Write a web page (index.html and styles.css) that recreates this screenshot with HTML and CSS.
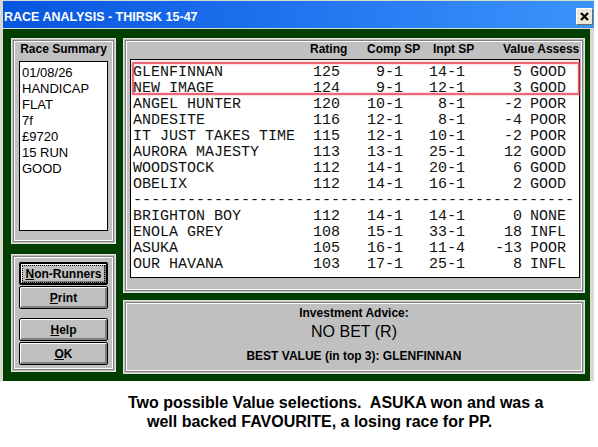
FILE: index.html
```html
<!DOCTYPE html>
<html lang="en">
<head>
  <meta charset="UTF-8">
  <meta name="viewport" content="width=device-width, initial-scale=1.0">
  <title>Race Analysis - Thirsk 15-47</title>
  <link rel="stylesheet" href="styles.css">
</head>
<body>
  <div class="window">
    <div class="titlebar">
      <span class="title">RACE ANALYSIS - THIRSK 15-47</span>
      <span class="close">
        <svg width="9" height="9" viewBox="0 0 9 9"><path d="M1 1L8 8M8 1L1 8" stroke="#000" stroke-width="2.2"/></svg>
      </span>
    </div>
    <div class="client">
      <div class="side">
        <div class="panel summary">
          <div class="panel-title">Race Summary</div>
          <div class="summary-list">
            <div>01/08/26</div>
            <div>HANDICAP</div>
            <div>FLAT</div>
            <div>7f</div>
            <div>£9720</div>
            <div>15 RUN</div>
            <div>GOOD</div>
          </div>
        </div>
        <div class="panel buttons">
          <button class="default"><span class="focus"><u>N</u>on-Runners</span></button>
          <button class="pair"><u>P</u>rint</button>
          <button class="group"><u>H</u>elp</button>
          <button class="pair"><u>O</u>K</button>
        </div>
      </div>
      <div class="main">
        <div class="panel runners">
          <div class="cols">
            <span></span><span>Rating</span><span>Comp SP</span><span>Inpt SP</span><span>Value Assess</span>
          </div>
          <div class="list" id="list">
            <div class="highlight"></div>
          </div>
        </div>
        <div class="panel advice">
          <div class="label">Investment Advice:</div>
          <div class="verdict">NO BET (R)</div>
          <div class="best">BEST VALUE (in top 3): GLENFINNAN</div>
        </div>
      </div>
    </div>
  </div>

  <div class="caption">
    <div>Two possible Value selections.&nbsp; ASUKA won and was a</div>
    <div class="indent">well backed FAVOURITE, a losing race for PP.</div>
  </div>

  <script>
    // name, rating, comp SP, input SP, value, assessment ; null = separator
    const runners = [
      ['GLENFINNAN', 125, '9-1', '14-1', 5, 'GOOD'],
      ['NEW IMAGE', 124, '9-1', '12-1', 3, 'GOOD'],
      ['ANGEL HUNTER', 120, '10-1', '8-1', -2, 'POOR'],
      ['ANDESITE', 116, '12-1', '8-1', -4, 'POOR'],
      ['IT JUST TAKES TIME', 115, '12-1', '10-1', -2, 'POOR'],
      ['AURORA MAJESTY', 113, '13-1', '25-1', 12, 'GOOD'],
      ['WOODSTOCK', 112, '14-1', '20-1', 6, 'GOOD'],
      ['OBELIX', 112, '14-1', '16-1', 2, 'GOOD'],
      null,
      ['BRIGHTON BOY', 112, '14-1', '14-1', 0, 'NONE'],
      ['ENOLA GREY', 108, '15-1', '33-1', 18, 'INFL'],
      ['ASUKA', 105, '16-1', '11-4', -13, 'POOR'],
      ['OUR HAVANA', 103, '17-1', '25-1', 8, 'INFL']
    ];

    const list = document.getElementById('list');
    runners.forEach(r => {
      const row = document.createElement('div');
      if (!r) {
        row.className = 'sep';
        row.textContent = '-'.repeat(49);
      } else {
        row.className = 'row';
        row.innerHTML = `<span>${r[0]}</span><span class="num">${r[1]}</span>` +
          `<span class="num">${r[2]}</span><span class="num">${r[3]}</span>` +
          `<span class="num">${r[4]}</span><span class="word">${r[5]}</span>`;
      }
      list.appendChild(row);
    });
  </script>
</body>
</html>
```
FILE: styles.css
```css
body {
  margin: 0;
  background: #fff;
  font-family: "Liberation Sans", Arial, sans-serif;
  color: #000;
}
.window {
  width: 587px;
  padding: 1px 4px 0 3px;
  background: #dcd9d0;
}
.titlebar {
  height: 27px;
  margin-right: -4px;
  box-sizing: border-box;
  padding: 4px 1px 0 1px;
  display: flex;
  align-items: center;
  justify-content: space-between;
  background: linear-gradient(to right, #0655e0, #3b94fd);
  color: #fff;
}
.title {
  font-weight: bold;
  font-size: 12.5px;
}
.close {
  width: 17px;
  height: 17px;
  box-sizing: border-box;
  display: flex;
  align-items: center;
  justify-content: center;
  background: #ece9d8;
  border: 1px solid #fff;
  border-right-color: #716f64;
  border-bottom-color: #716f64;
}
.client {
  margin-top: 1px;
  background: #003f00;
  padding: 9px 5px 7px 8px;
  display: grid;
  grid-template-columns: 105px 462px;
  column-gap: 7px;
  align-items: start;
}
.side {
  display: flex;
  flex-direction: column;
  gap: 10px;
}
.main {
  display: flex;
  flex-direction: column;
  gap: 7px;
}
.panel {
  background: #c0c0c0;
  border: 1px solid #e4e4e4;
  box-shadow: inset 0 0 0 1px #c0c0c0, inset 0 0 0 2px #808080, inset 0 0 0 3px #fff;
  box-sizing: border-box;
}
.panel-title {
  font-weight: bold;
  font-size: 12px;
  line-height: 16px;
  text-align: center;
}
.summary {
  height: 206px;
  padding: 2px 7px 0;
}
.summary-list {
  margin-top: 4px;
  height: 170px;
  box-sizing: border-box;
  background: #fff;
  border: 1px solid #000;
  padding: 3px 2px;
  font-size: 13px;
  line-height: 16px;
}
.buttons {
  padding: 7px 7px 6px;
}
button {
  display: block;
  width: 89px;
  height: 23px;
  padding: 0;
  background: #c0c0c0;
  border: 1px solid #000;
  border-radius: 2px;
  box-shadow: inset 1px 1px #fff, inset -2px -2px #808080;
  font-family: "Liberation Sans", Arial, sans-serif;
  font-weight: bold;
  font-size: 12px;
  color: #000;
}
button.default {
  border-width: 2px;
}
.focus {
  display: inline-block;
  padding: 1px 2px;
  outline: 1px dotted #000;
}
button.pair {
  margin-top: 1px;
}
button.group {
  margin-top: 9px;
}
.runners {
  height: 255px;
  padding: 2px 4px 0 6px;
}
.cols {
  display: grid;
  grid-template-columns: 180px 57px 66px 70px auto;
  font-weight: bold;
  font-size: 12px;
  line-height: 16px;
}
.list {
  position: relative;
  margin-top: 2px;
  height: 219px;
  box-sizing: border-box;
  background: #fff;
  border: 1px solid #000;
  padding: 5px 2px 0;
  font-family: "Liberation Mono", "DejaVu Sans Mono", monospace;
  font-size: 15px;
  line-height: 16px;
  color: #111;
}
.row {
  display: grid;
  grid-template-columns: 170px 37px 63px 62px 57px auto;
  white-space: pre;
}
.num {
  text-align: right;
}
.word {
  padding-left: 8px;
}
.sep {
  white-space: pre;
}
.highlight {
  position: absolute;
  left: 1px;
  top: 2px;
  width: 448px;
  height: 33px;
  box-sizing: border-box;
  border: 2px solid rgba(226, 40, 64, 0.7);
  box-shadow: 0 0 2px rgba(230, 70, 90, 0.6), inset 0 0 2px rgba(230, 70, 90, 0.5);
}
.advice {
  height: 74px;
  padding-top: 4px;
  text-align: center;
}
.advice .label,
.advice .best {
  font-weight: bold;
  font-size: 12px;
  line-height: 16px;
}
.advice .verdict {
  font-size: 16px;
  line-height: 22px;
}
.advice .best {
  margin-top: 5px;
}
.caption {
  margin: 12px 0 0 128px;
  font-weight: bold;
  font-size: 16px;
  line-height: 19px;
}
.caption .indent {
  padding-left: 19px;
}
```
